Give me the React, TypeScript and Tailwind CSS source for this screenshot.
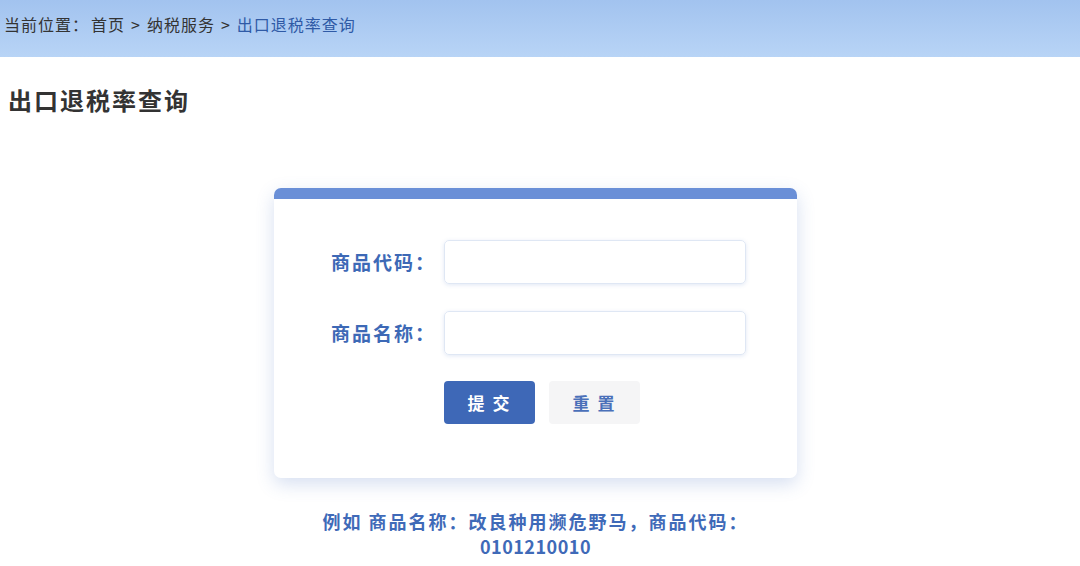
import React from "react";

export default function App() {
  const font = { fontFamily: '"Noto Sans CJK SC", "Noto Sans", sans-serif' };
  return (
    <div className="w-[1080px] h-[566px] bg-white overflow-hidden" style={font}>
      <div className="h-[57px] bg-gradient-to-b from-[#a2c3ef] to-[#b8d4f6] flex items-start pt-[12px] pl-[4px] text-[16px] leading-[24px] text-[#333333] tracking-[1px]">
        <span>当前位置：</span>
        <span className="ml-[2px]">首页</span>
        <span className="mx-[6px]">&gt;</span>
        <span>纳税服务</span>
        <span className="mx-[6px]">&gt;</span>
        <span className="text-[#2f5aa6]">出口退税率查询</span>
      </div>

      <h1 className="mt-[27px] pl-[8px] text-[24px] leading-[32px] font-bold text-[#333333] tracking-[2px]">
        出口退税率查询
      </h1>

      <div className="flex flex-col items-center pr-[9px] mt-[72px]">
        <div className="w-[523px] bg-white rounded-[7px] overflow-hidden shadow-[0_6px_18px_rgba(70,110,190,0.22)]">
          <div className="h-[11px] bg-[#6a8fd7]" />
          <div className="pt-[41px] pb-[54px]">
            <div className="flex items-center">
              <label className="w-[162px] text-right text-[19px] font-bold text-[#3d69b6] tracking-[2px]">
                商品代码：
              </label>
              <input className="ml-[8px] w-[302px] h-[44px] rounded-[5px] border border-[#dfe7f4] shadow-[0_1px_4px_rgba(90,130,200,0.18)] outline-none" />
            </div>
            <div className="flex items-center mt-[27px]">
              <label className="w-[162px] text-right text-[19px] font-bold text-[#3d69b6] tracking-[2px]">
                商品名称：
              </label>
              <input className="ml-[8px] w-[302px] h-[44px] rounded-[5px] border border-[#dfe7f4] shadow-[0_1px_4px_rgba(90,130,200,0.18)] outline-none" />
            </div>
            <div className="flex mt-[26px] pl-[170px] gap-[14px]">
              <button className="w-[91px] h-[43px] rounded-[4px] bg-[#3e68b7] text-white text-[17px] font-bold tracking-[2px]">
                提 交
              </button>
              <button className="w-[91px] h-[43px] rounded-[4px] bg-[#f5f5f6] text-[#4a70b9] text-[17px] font-bold tracking-[2px]">
                重 置
              </button>
            </div>
          </div>
        </div>

        <div className="mt-[31px] w-[470px] text-center text-[18px] leading-[25px] font-bold text-[#3f6ab8] tracking-[2px]">
          例如 商品名称：改良种用濒危野马，商品代码：
          <span className="tracking-[0.5px]">0101210010</span>
        </div>
      </div>
    </div>
  );
}
